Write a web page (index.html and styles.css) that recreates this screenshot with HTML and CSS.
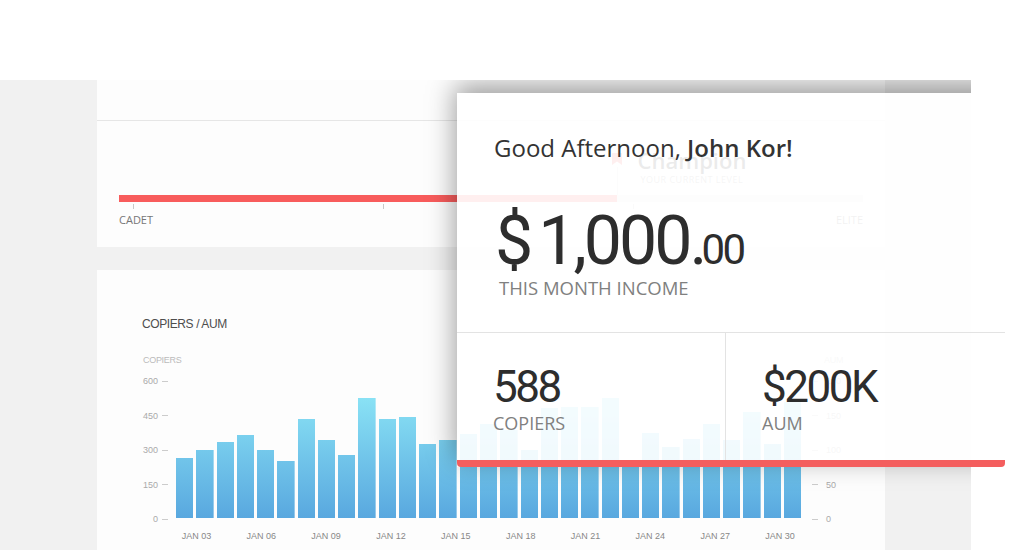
FILE: index.html
```html
<!DOCTYPE html>
<html lang="en">
<head>
    <meta charset="UTF-8">
    <meta name="viewport" content="width=device-width, initial-scale=1.0">
    <title>Copier Dashboard</title>
    <link rel="stylesheet" href="styles.css">
</head>
<body>

<div class="stage">
    <div class="dash">
        <aside class="rail"></aside>

        <div class="main">
            <!-- Level progress -->
            <section class="card level">
                <div class="level-head"></div>
                <div class="level-body">
                    <div class="badge">
                        <div class="badge-mark">
                            <svg width="10" height="12" viewBox="0 0 10 12"><path d="M0 0h10v12L5 8.5 0 12z" fill="#f65c5c"/></svg>
                        </div>
                        <div class="badge-text">
                            <div class="badge-name">Champion</div>
                            <div class="badge-sub">Your current level</div>
                        </div>
                    </div>
                    <div class="track"><div class="fill" style="width: 67%"></div></div>
                    <div class="ticks"><span></span><span></span><span></span></div>
                    <div class="levels"><span>Cadet</span><span>Elite</span></div>
                </div>
            </section>

            <!-- Copiers / AUM chart -->
            <section class="card chart">
                <h3 class="chart-title">COPIERS / AUM</h3>
                <div class="axis-names"><span>COPIERS</span><span>AUM</span></div>
                <div class="plot">
                    <div class="yaxis left">
                        <span>600</span><span>450</span><span>300</span><span>150</span><span>0</span>
                    </div>
                    <div class="bars">
                        <div class="bar" style="height: 60px"></div>
                        <div class="bar" style="height: 68px"></div>
                        <div class="bar" style="height: 76px"></div>
                        <div class="bar" style="height: 83px"></div>
                        <div class="bar" style="height: 68px"></div>
                        <div class="bar" style="height: 57px"></div>
                        <div class="bar" style="height: 99px"></div>
                        <div class="bar" style="height: 78px"></div>
                        <div class="bar" style="height: 63px"></div>
                        <div class="bar" style="height: 120px"></div>
                        <div class="bar" style="height: 99px"></div>
                        <div class="bar" style="height: 101px"></div>
                        <div class="bar" style="height: 74px"></div>
                        <div class="bar" style="height: 78px"></div>
                        <div class="bar" style="height: 84px"></div>
                        <div class="bar" style="height: 94px"></div>
                        <div class="bar" style="height: 88px"></div>
                        <div class="bar" style="height: 68px"></div>
                        <div class="bar" style="height: 110px"></div>
                        <div class="bar" style="height: 111px"></div>
                        <div class="bar" style="height: 111px"></div>
                        <div class="bar" style="height: 120px"></div>
                        <div class="bar" style="height: 58px"></div>
                        <div class="bar" style="height: 85px"></div>
                        <div class="bar" style="height: 71px"></div>
                        <div class="bar" style="height: 79px"></div>
                        <div class="bar" style="height: 94px"></div>
                        <div class="bar" style="height: 78px"></div>
                        <div class="bar" style="height: 106px"></div>
                        <div class="bar" style="height: 74px"></div>
                        <div class="bar" style="height: 116px"></div>
                    </div>
                    <div class="yaxis right">
                        <span>200</span><span>150</span><span>100</span><span>50</span><span>0</span>
                    </div>
                </div>
                <div class="xaxis">
                    <span>JAN 03</span><span>JAN 06</span><span>JAN 09</span><span>JAN 12</span><span>JAN 15</span>
                    <span>JAN 18</span><span>JAN 21</span><span>JAN 24</span><span>JAN 27</span><span>JAN 30</span>
                </div>
            </section>
        </div>

        <div class="summary-shadow"></div>
    </div>

    <!-- Summary card on top -->
    <div class="summary">
        <div class="summary-top">
            <p class="greeting">Good Afternoon, <strong>John Kor!</strong></p>
            <div class="income"><span class="cur">$</span>1,000.<span class="cents">00</span></div>
            <div class="summary-label income-label">This month income</div>
        </div>
        <div class="summary-stats">
            <div class="stat">
                <div class="stat-value">588</div>
                <div class="summary-label">Copiers</div>
            </div>
            <div class="stat">
                <div class="stat-value">$200K</div>
                <div class="summary-label">AUM</div>
            </div>
        </div>
    </div>
</div>

</body>
</html>
```

FILE: styles.css
```css
body {
    margin: 0;
    background: #fff;
    font-family: "Open Sans", "Liberation Sans", sans-serif;
    color: #333;
}
.stage {
    position: relative;
    width: 1024px;
    height: 550px;
    padding-top: 80px;
    box-sizing: border-box;
    overflow: hidden;
}
.dash {
    position: relative;
    display: flex;
    width: 971px;
    height: 470px;
    background: #f1f1f1;
    overflow: hidden;
}
.rail {
    width: 97px;
    flex-shrink: 0;
}
.main {
    width: 788px;
    display: flex;
    flex-direction: column;
    gap: 23px;
}
.card {
    background: #fdfdfd;
}

/* level card */
.level {
    height: 167px;
    flex-shrink: 0;
}
.level-head {
    height: 40px;
    border-bottom: 1px solid #e6e6e6;
}
.level-body {
    padding: 26px 22px 0;
}
.badge {
    display: flex;
    height: 48px;
    margin-left: calc(67% - 5px);
}
.badge-mark {
    display: flex;
    flex-direction: column;
    align-items: center;
    width: 10px;
    padding-top: 6px;
}
.badge-mark svg {
    display: block;
}
.badge-mark::after {
    content: "";
    flex: 1;
    width: 1px;
    margin-top: 2px;
    background: #ddd;
}
.badge-text {
    margin-left: 15px;
}
.badge-name {
    font-size: 22px;
    line-height: 26px;
    font-weight: 600;
    color: #333;
}
.badge-sub {
    margin: 1px 0 0 3px;
    font-size: 9px;
    line-height: 12px;
    letter-spacing: 0.5px;
    text-transform: uppercase;
    color: #999;
}
.track {
    height: 7px;
    background: #ececec;
}
.fill {
    height: 100%;
    background: #f85c5c;
}
.ticks {
    display: grid;
    grid-template-columns: repeat(3, 250px);
    height: 5px;
    margin-top: 2px;
}
.ticks span {
    display: block;
    width: 1px;
    height: 5px;
    margin-left: 14px;
    background: #c8c8c8;
}
.levels {
    display: flex;
    justify-content: space-between;
    margin-top: 3px;
    font-size: 11px;
    line-height: 15px;
    text-transform: uppercase;
    color: #777;
}

/* chart card */
.chart {
    flex: 1;
    padding: 47px 0 0 45px;
    font-family: "Liberation Sans", Arial, sans-serif;
}
.chart-title {
    margin: 0;
    font-size: 12px;
    line-height: 14px;
    font-weight: normal;
    letter-spacing: -0.4px;
    color: #4d4d4d;
}
.axis-names {
    display: grid;
    grid-template-columns: 681px auto;
    margin-top: 24px;
    padding-left: 1px;
    font-size: 9px;
    line-height: 11px;
    letter-spacing: -0.3px;
    color: #bbb;
}
.plot {
    display: flex;
    margin-top: 9px;
}
.yaxis {
    display: flex;
    flex-direction: column;
    justify-content: space-between;
    height: 150px;
    font-size: 9px;
    line-height: 12px;
    color: #aaa;
}
.yaxis span {
    display: flex;
    align-items: center;
}
.yaxis.left {
    width: 34px;
    padding-right: 8px;
    box-sizing: border-box;
    align-items: flex-end;
}
.yaxis.left span::after,
.yaxis.right span::before {
    content: "";
    width: 6px;
    height: 1px;
    background: #ccc;
}
.yaxis.left span::after {
    margin-left: 4px;
}
.yaxis.right {
    margin-left: 11px;
}
.yaxis.right span::before {
    margin-right: 8px;
}
.bars {
    display: flex;
    align-items: flex-end;
    gap: 3px;
    width: 625px;
    height: 137px;
    margin-top: 6px;
}
.bar {
    flex: 1;
    background: linear-gradient(#90eaf8, #59a8df) bottom / 100% 137px no-repeat;
}
.xaxis {
    display: grid;
    grid-template-columns: repeat(10, 64.85px);
    margin: 6px 0 0 22px;
    font-size: 9px;
    line-height: 11px;
    text-align: center;
    color: #888;
}

/* summary card; its shadow lives inside the dashboard so it is cut at its edges */
.summary-shadow {
    position: absolute;
    z-index: 1;
    left: 457px;
    top: 13px;
    width: 548px;
    height: 374px;
    background: transparent;
    box-shadow: -2px -8px 26px rgba(0, 0, 0, 0.38);
}
.summary {
    position: absolute;
    z-index: 2;
    left: 457px;
    top: 93px;
    width: 548px;
    background: rgba(255, 255, 255, 0.9);
    border-bottom: 7px solid #f45e5e;
    border-radius: 0 0 4px 4px;
    color: #2d2d2d;
}
.summary-top {
    height: 240px;
    box-sizing: border-box;
    padding: 39px 0 0 37px;
    border-bottom: 1px solid #e3e3e3;
}
.greeting {
    margin: 0;
    font-size: 24px;
    line-height: 32px;
    color: #333;
}
.greeting strong {
    font-weight: 600;
}
.income {
    margin: 43px 0 0 1px;
    font-family: Roboto, "Liberation Sans", sans-serif;
    font-size: 68px;
    line-height: 68px;
    letter-spacing: -3px;
}
.income .cur {
    margin-right: 8px;
}
.income .cents {
    margin-left: -3px;
    font-size: 42px;
    line-height: 42px;
    letter-spacing: -2.5px;
}
.summary-label {
    font-size: 18px;
    line-height: 24px;
    text-transform: uppercase;
    color: #808080;
}
.income-label {
    margin: 1px 0 0 5px;
    font-size: 18.5px;
}
.summary-stats {
    display: grid;
    grid-template-columns: 268px 1fr;
    height: 127px;
}
.stat {
    padding: 32px 0 0 36px;
}
.stat + .stat {
    border-left: 1px solid #e3e3e3;
}
.stat-value {
    font-family: Roboto, "Liberation Sans", sans-serif;
    font-size: 44px;
    line-height: 44px;
    letter-spacing: -2.5px;
}
.stat .summary-label {
    margin-top: 2px;
}
```
